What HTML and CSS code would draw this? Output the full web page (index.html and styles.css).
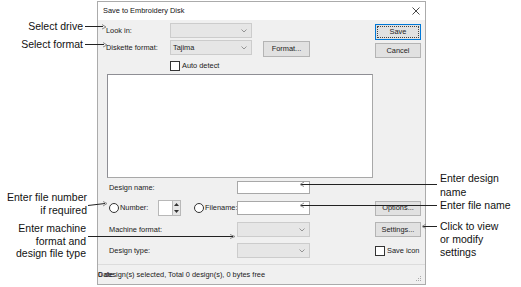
FILE: index.html
```html
<!DOCTYPE html>
<html>
<head>
<meta charset="utf-8">
<title>Save to Embroidery Disk</title>
<link rel="stylesheet" href="styles.css">
</head>
<body>
<div class="stage">
  <div class="dialog">
    <div class="titlebar">
      <span class="title">Save to Embroidery Disk</span>
      <svg class="close" width="8" height="8" viewBox="0 0 8 8"><path d="M0.5 0.5 L7.5 7.5 M7.5 0.5 L0.5 7.5" stroke="#333" stroke-width="0.9" fill="none"/></svg>
    </div>
    <div class="body">
      <div class="top">
        <div class="top-left">
          <div class="row r1">
            <span class="lbl">Look in:</span>
            <div class="combo disabled w82"><span class="val"></span><svg class="chev" width="6" height="4" viewBox="0 0 6 4"><path d="M0.5 0.5 L3 3 L5.5 0.5" stroke="#8a8a8a" stroke-width="0.9" fill="none"/></svg></div>
          </div>
          <div class="row r2">
            <span class="lbl">Diskette format:</span>
            <div class="combo disabled w82"><span class="val">Tajima</span><svg class="chev" width="6" height="4" viewBox="0 0 6 4"><path d="M0.5 0.5 L3 3 L5.5 0.5" stroke="#8a8a8a" stroke-width="0.9" fill="none"/></svg></div>
            <div class="btn fmt">Format...</div>
          </div>
          <div class="row r3">
            <span class="check"></span><span class="chk-lbl">Auto detect</span>
          </div>
        </div>
        <div class="top-right">
          <div class="btn save"><span class="focus">Save</span></div>
          <div class="btn cancel">Cancel</div>
        </div>
      </div>
      <div class="list"></div>
      <div class="lrow design">
        <span class="lbl2">Design name:</span>
        <div class="edit"></div>
      </div>
      <div class="lrow number">
        <span class="radio"></span><span class="num-lbl">Number:</span>
        <div class="spin">
          <div class="spin-edit"></div>
          <div class="spin-btns">
            <div class="sb"><svg width="5" height="3" viewBox="0 0 5 3"><path d="M0 3 L2.5 0 L5 3 Z" fill="#333"/></svg></div>
            <div class="sb"><svg width="5" height="3" viewBox="0 0 5 3"><path d="M0 0 L2.5 3 L5 0 Z" fill="#333"/></svg></div>
          </div>
        </div>
        <span class="radio r-file"></span><span class="file-lbl">Filename:</span>
        <div class="edit tall"></div>
        <div class="btn side">Options...</div>
      </div>
      <div class="lrow machine">
        <span class="lbl2">Machine format:</span>
        <div class="combo disabled w73"><span class="val"></span><svg class="chev" width="6" height="4" viewBox="0 0 6 4"><path d="M0.5 0.5 L3 3 L5.5 0.5" stroke="#8a8a8a" stroke-width="0.9" fill="none"/></svg></div>
        <div class="btn side">Settings...</div>
      </div>
      <div class="lrow dtype">
        <span class="lbl2">Design type:</span>
        <div class="combo disabled w73"><span class="val"></span><svg class="chev" width="6" height="4" viewBox="0 0 6 4"><path d="M0.5 0.5 L3 3 L5.5 0.5" stroke="#8a8a8a" stroke-width="0.9" fill="none"/></svg></div>
        <div class="save-icon"><span class="check"></span><span class="chk-lbl">Save icon</span></div>
      </div>
    </div>
    <div class="status">
      <span class="status-text">0 design(s) selected, Total 0 design(s), 0 bytes free</span>
      <span class="status-date">Date</span>
      <svg class="grip" width="6" height="6" viewBox="0 0 6 6"><rect x="4" y="0" width="1" height="1" fill="#aaa"/><rect x="2" y="2" width="1" height="1" fill="#aaa"/><rect x="4" y="2" width="1" height="1" fill="#aaa"/><rect x="0" y="4" width="1" height="1" fill="#aaa"/><rect x="2" y="4" width="1" height="1" fill="#aaa"/><rect x="4" y="4" width="1" height="1" fill="#aaa"/></svg>
    </div>
  </div>

  <div class="ann left a-drive">Select drive</div>
  <div class="ann left a-format">Select format</div>
  <div class="ann left a-number">Enter file number<br>if required</div>
  <div class="ann left a-machine">Enter machine<br>format and<br>design file type</div>
  <div class="ann right a-design">Enter design<br>name</div>
  <div class="ann right a-file">Enter file name</div>
  <div class="ann right a-settings">Click to view<br>or modify<br>settings</div>

  <svg class="leaders" width="521" height="287" viewBox="0 0 521 287">
    <g stroke="#222" stroke-width="1" fill="none">
      <path d="M85 26.5 H103"/>
      <path d="M85 44.5 H104"/>
      <path d="M88 205.5 L105 203.5"/>
      <path d="M88 236.5 H233"/>
      <path d="M437 184.5 H301"/>
      <path d="M437 205.5 H301"/>
      <path d="M437 226.5 H423"/>
    </g>
    <g stroke="#8c8c8c" stroke-width="1" fill="none">
      <path d="M102 24.5 L106 27 L102 29"/>
      <path d="M103 42.5 L107 45 L103 47"/>
      <path d="M103 201.5 L107 203.5 L103 206"/>
      <path d="M230 234.5 L235 236.5 L230 238.5"/>
      <path d="M304 182 L300 184.5 L304 186.5"/>
      <path d="M304 203 L300 205.5 L304 207.5"/>
      <path d="M426 224 L422 226.5 L426 228.5"/>
    </g>
  </svg>
</div>
</body>
</html>
```

FILE: styles.css
```css
html, body {
  margin: 0;
  padding: 0;
  background: #ffffff;
}

.stage {
  position: relative;
  width: 521px;
  height: 287px;
  padding-top: 1px;
  box-sizing: border-box;
  overflow: hidden;
  font-family: "Liberation Sans", Arial, sans-serif;
  color: #1a1a1a;
}

/* ---------- dialog ---------- */
.dialog {
  margin-left: 97px;
  width: 329px;
  box-sizing: border-box;
  border: 1px solid #ababab;
  background: #f0f0f0;
  font-size: 7.4px;
  line-height: 1;
}

.titlebar {
  height: 18px;
  background: #ffffff;
  display: flex;
  align-items: center;
  justify-content: space-between;
  padding: 0 5px 0 5px;
}

.title {
  font-size: 7.4px;
  color: #111;
}

.close {
  display: block;
}

.body {
  display: flex;
  flex-direction: column;
}

.top {
  display: flex;
  height: 54px;
}

.top-left {
  padding-left: 8px;
  display: flex;
  flex-direction: column;
}

.row {
  display: flex;
  align-items: center;
  height: 15px;
}

.r1 { margin-top: 3px; }
.r2 { margin-top: 2px; }
.r3 { margin-top: 6px; height: 10px; padding-left: 64px; }

.lbl {
  width: 64px;
  white-space: nowrap;
}

.combo {
  height: 15px;
  box-sizing: border-box;
  border: 1px solid #cccccc;
  background: #e6e6e6;
  display: flex;
  align-items: center;
  justify-content: space-between;
  padding: 0 4px 0 2px;
  color: #222;
}

.w82 { width: 82px; }
.w73 { width: 73px; }

.chev { display: block; }

.btn {
  box-sizing: border-box;
  border: 1px solid #b4b4b4;
  background: #e1e1e1;
  display: flex;
  align-items: center;
  justify-content: center;
  color: #222;
  white-space: nowrap;
}

.fmt {
  margin-left: 11px;
  width: 47px;
  height: 16px;
  align-self: flex-start;
  margin-top: 1px;
}

.check {
  width: 10px;
  height: 10px;
  box-sizing: border-box;
  border: 1px solid #333;
  background: #fff;
  flex: none;
}

.chk-lbl {
  margin-left: 2px;
  white-space: nowrap;
}

.top-right {
  margin-left: auto;
  padding-right: 4px;
  display: flex;
  flex-direction: column;
}

.save {
  margin-top: 4px;
  width: 46px;
  height: 16px;
  border-color: #0078d7;
  padding: 1px;
}

.save .focus {
  width: 100%;
  height: 100%;
  box-sizing: border-box;
  border: 1px dotted #444;
  display: flex;
  align-items: center;
  justify-content: center;
}

.cancel {
  margin-top: 3px;
  width: 46px;
  height: 15px;
}

.list {
  margin-left: 9px;
  width: 266px;
  height: 104px;
  box-sizing: border-box;
  background: #ffffff;
  border: 1px solid #a8a8a8;
  border-top-color: #8e8e94;
  border-left-color: #8e8e94;
}

/* ---------- lower rows ---------- */
.lrow {
  display: flex;
  align-items: center;
  padding-left: 11px;
  padding-right: 4px;
}

.lbl2 {
  width: 128px;
  white-space: nowrap;
}

.design { margin-top: 3px; height: 13px; }
.number { margin-top: 6px; height: 16px; }
.machine { margin-top: 6px; height: 15px; }
.dtype { margin-top: 6px; height: 15px; }

.edit {
  width: 73px;
  height: 13px;
  box-sizing: border-box;
  border: 1px solid #a8a8a8;
  background: #fff;
}

.edit.tall { height: 14px; }

.radio {
  width: 10px;
  height: 10px;
  box-sizing: border-box;
  border: 1px solid #333;
  border-radius: 50%;
  background: #fff;
  flex: none;
}

.num-lbl {
  margin-left: 1px;
  width: 38px;
}

.spin {
  display: flex;
  height: 16px;
}

.spin-edit {
  width: 14px;
  height: 16px;
  box-sizing: border-box;
  border: 1px solid #b8b8b8;
  border-right: none;
  background: #fff;
}

.spin-btns {
  width: 9px;
  height: 16px;
  display: flex;
  flex-direction: column;
  box-sizing: border-box;
  border: 1px solid #b8b8b8;
  background: #e6e6e6;
}

.sb {
  flex: 1;
  display: flex;
  align-items: center;
  justify-content: center;
}

.sb svg { display: block; }

.r-file { margin-left: 13px; }

.file-lbl {
  margin-left: 1px;
  width: 32px;
  white-space: nowrap;
}

.side {
  margin-left: auto;
  width: 46px;
  height: 15px;
}

.save-icon {
  margin-left: auto;
  width: 46px;
  display: flex;
  align-items: center;
}

/* ---------- status bar ---------- */
.status {
  position: relative;
  margin-top: 6px;
  height: 19px;
  border-top: 1px solid #dcdcdc;
  display: flex;
  align-items: center;
  padding-left: 0;
}

.status-text {
  white-space: nowrap;
}

.status-date {
  position: absolute;
  left: 0;
  top: 50%;
  transform: translateY(-50%);
}

.grip {
  position: absolute;
  right: 3px;
  bottom: 2px;
}

/* ---------- annotations ---------- */
.ann {
  position: absolute;
  font-size: 10.5px;
  line-height: 13px;
  color: #111;
  white-space: nowrap;
}

.ann.left {
  left: 0;
  text-align: right;
}

.ann.right {
  left: 440px;
  text-align: left;
}

.a-drive { top: 20px; width: 83px; }
.a-format { top: 38px; width: 83px; }
.a-number { top: 191px; width: 87px; }
.a-machine { top: 222px; width: 86px; line-height: 12.7px; }
.a-design { top: 171px; line-height: 14px; }
.a-file { top: 199px; }
.a-settings { top: 220px; }

.leaders {
  position: absolute;
  left: 0;
  top: 0;
  pointer-events: none;
}
```
